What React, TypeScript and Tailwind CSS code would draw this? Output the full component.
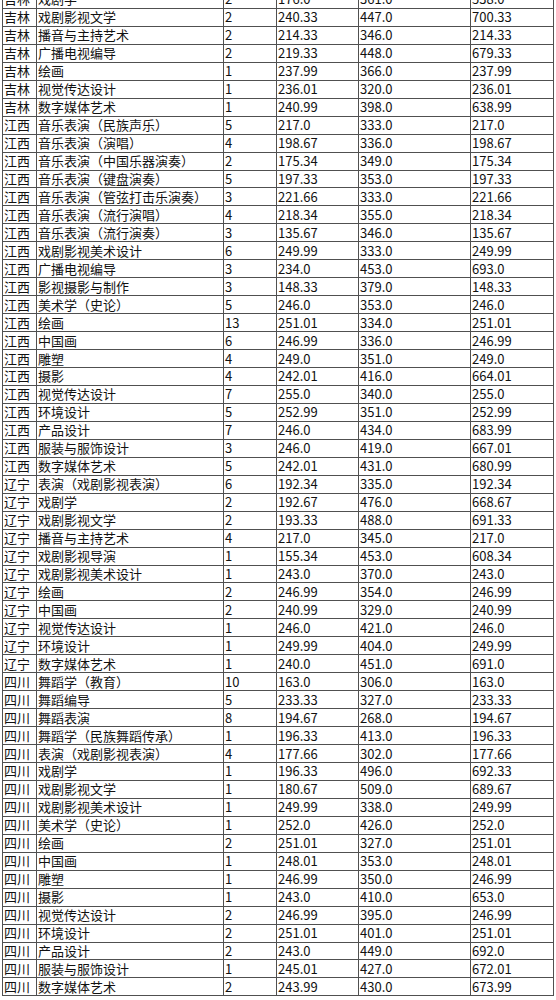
import React from 'react';

const rows: [string, string, string, string, string, string][] = [
  ['吉林', '戏剧学', '2', '176.0', '361.0', '538.0'],
  ['吉林', '戏剧影视文学', '2', '240.33', '447.0', '700.33'],
  ['吉林', '播音与主持艺术', '2', '214.33', '346.0', '214.33'],
  ['吉林', '广播电视编导', '2', '219.33', '448.0', '679.33'],
  ['吉林', '绘画', '1', '237.99', '366.0', '237.99'],
  ['吉林', '视觉传达设计', '1', '236.01', '320.0', '236.01'],
  ['吉林', '数字媒体艺术', '1', '240.99', '398.0', '638.99'],
  ['江西', '音乐表演（民族声乐）', '5', '217.0', '333.0', '217.0'],
  ['江西', '音乐表演（演唱）', '4', '198.67', '336.0', '198.67'],
  ['江西', '音乐表演（中国乐器演奏）', '2', '175.34', '349.0', '175.34'],
  ['江西', '音乐表演（键盘演奏）', '5', '197.33', '353.0', '197.33'],
  ['江西', '音乐表演（管弦打击乐演奏）', '3', '221.66', '333.0', '221.66'],
  ['江西', '音乐表演（流行演唱）', '4', '218.34', '355.0', '218.34'],
  ['江西', '音乐表演（流行演奏）', '3', '135.67', '346.0', '135.67'],
  ['江西', '戏剧影视美术设计', '6', '249.99', '333.0', '249.99'],
  ['江西', '广播电视编导', '3', '234.0', '453.0', '693.0'],
  ['江西', '影视摄影与制作', '3', '148.33', '379.0', '148.33'],
  ['江西', '美术学（史论）', '5', '246.0', '353.0', '246.0'],
  ['江西', '绘画', '13', '251.01', '334.0', '251.01'],
  ['江西', '中国画', '6', '246.99', '336.0', '246.99'],
  ['江西', '雕塑', '4', '249.0', '351.0', '249.0'],
  ['江西', '摄影', '4', '242.01', '416.0', '664.01'],
  ['江西', '视觉传达设计', '7', '255.0', '340.0', '255.0'],
  ['江西', '环境设计', '5', '252.99', '351.0', '252.99'],
  ['江西', '产品设计', '7', '246.0', '434.0', '683.99'],
  ['江西', '服装与服饰设计', '3', '246.0', '419.0', '667.01'],
  ['江西', '数字媒体艺术', '5', '242.01', '431.0', '680.99'],
  ['辽宁', '表演（戏剧影视表演）', '6', '192.34', '335.0', '192.34'],
  ['辽宁', '戏剧学', '2', '192.67', '476.0', '668.67'],
  ['辽宁', '戏剧影视文学', '2', '193.33', '488.0', '691.33'],
  ['辽宁', '播音与主持艺术', '4', '217.0', '345.0', '217.0'],
  ['辽宁', '戏剧影视导演', '1', '155.34', '453.0', '608.34'],
  ['辽宁', '戏剧影视美术设计', '1', '243.0', '370.0', '243.0'],
  ['辽宁', '绘画', '2', '246.99', '354.0', '246.99'],
  ['辽宁', '中国画', '2', '240.99', '329.0', '240.99'],
  ['辽宁', '视觉传达设计', '1', '246.0', '421.0', '246.0'],
  ['辽宁', '环境设计', '1', '249.99', '404.0', '249.99'],
  ['辽宁', '数字媒体艺术', '1', '240.0', '451.0', '691.0'],
  ['四川', '舞蹈学（教育）', '10', '163.0', '306.0', '163.0'],
  ['四川', '舞蹈编导', '5', '233.33', '327.0', '233.33'],
  ['四川', '舞蹈表演', '8', '194.67', '268.0', '194.67'],
  ['四川', '舞蹈学（民族舞蹈传承）', '1', '196.33', '413.0', '196.33'],
  ['四川', '表演（戏剧影视表演）', '4', '177.66', '302.0', '177.66'],
  ['四川', '戏剧学', '1', '196.33', '496.0', '692.33'],
  ['四川', '戏剧影视文学', '1', '180.67', '509.0', '689.67'],
  ['四川', '戏剧影视美术设计', '1', '249.99', '338.0', '249.99'],
  ['四川', '美术学（史论）', '1', '252.0', '426.0', '252.0'],
  ['四川', '绘画', '2', '251.01', '327.0', '251.01'],
  ['四川', '中国画', '1', '248.01', '353.0', '248.01'],
  ['四川', '雕塑', '1', '246.99', '350.0', '246.99'],
  ['四川', '摄影', '1', '243.0', '410.0', '653.0'],
  ['四川', '视觉传达设计', '2', '246.99', '395.0', '246.99'],
  ['四川', '环境设计', '2', '251.01', '401.0', '251.01'],
  ['四川', '产品设计', '2', '243.0', '449.0', '692.0'],
  ['四川', '服装与服饰设计', '1', '245.01', '427.0', '672.01'],
  ['四川', '数字媒体艺术', '2', '243.99', '430.0', '673.99'],
];

const widths = ['w-[34px]', 'w-[187px]', 'w-[53px]', 'w-[82px]', 'w-[112px]', 'w-[83px]'];

export default function App() {
  return (
    <div className="w-[556px] h-[1000px] overflow-hidden bg-white">
      <table
        className="ml-[2px] -mt-[10px] w-[551px] table-fixed border-collapse text-[13px] text-[#111] font-['Noto_Sans_CJK_SC',sans-serif]"
      >
        <colgroup>
          {widths.map((w, i) => (
            <col key={i} className={w} />
          ))}
        </colgroup>
        <tbody>
          {rows.map((r, i) => (
            <tr key={i} className="h-[17.96px]">
              {r.map((c, j) => (
                <td
                  key={j}
                  className="border border-[#505050] p-0 pl-px leading-[16px] whitespace-nowrap overflow-hidden align-middle"
                >
                  {c}
                </td>
              ))}
            </tr>
          ))}
        </tbody>
      </table>
    </div>
  );
}
